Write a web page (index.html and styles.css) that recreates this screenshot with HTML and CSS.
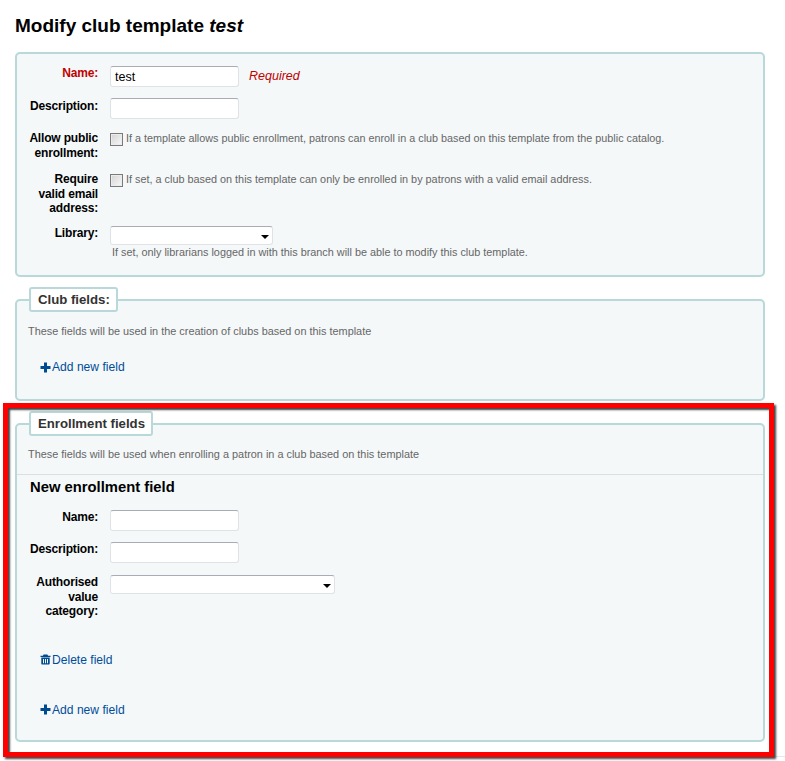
FILE: index.html
```html
<!DOCTYPE html>
<html lang="en">
<head>
<meta charset="utf-8">
<title>Modify club template</title>
<link rel="stylesheet" href="styles.css">
</head>
<body>
<main class="page">
  <h1 class="title">Modify club template <i>test</i></h1>

  <fieldset class="box box-main">
    <div class="row row-name">
      <label class="lbl lbl-req">Name:</label>
      <input class="txt" type="text" value="test">
      <span class="req">Required</span>
    </div>
    <div class="row row-desc">
      <label class="lbl">Description:</label>
      <input class="txt" type="text">
    </div>
    <div class="row row-allow">
      <label class="lbl">Allow public enrollment:</label>
      <span class="check"></span>
      <span class="hint">If a template allows public enrollment, patrons can enroll in a club based on this template from the public catalog.</span>
    </div>
    <div class="row row-valid">
      <label class="lbl">Require valid email address:</label>
      <span class="check"></span>
      <span class="hint hint-valid">If set, a club based on this template can only be enrolled in by patrons with a valid email address.</span>
    </div>
    <div class="row row-lib">
      <label class="lbl">Library:</label>
      <div class="stack">
        <span class="sel sel-lib"></span>
        <span class="hint hint-under">If set, only librarians logged in with this branch will be able to modify this club template.</span>
      </div>
    </div>
  </fieldset>

  <fieldset class="box box-club">
    <legend class="leg">Club fields:</legend>
    <p class="intro">These fields will be used in the creation of clubs based on this template</p>
    <a class="act act-club" href="#"><svg class="ico" viewBox="0 0 11 11"><path d="M4 0.5h3v3.5h3.5v3H7v3.500H4V7H0.500V4H4z"/></svg>Add new field</a>
  </fieldset>

  <fieldset class="box box-enrol">
    <legend class="leg">Enrollment fields</legend>
    <p class="intro intro-enrol">These fields will be used when enrolling a patron in a club based on this template</p>
    <section class="sub">
      <h2 class="subhead">New enrollment field</h2>
      <div class="row row-sname">
        <label class="lbl">Name:</label>
        <input class="txt" type="text">
      </div>
      <div class="row row-sdesc">
        <label class="lbl">Description:</label>
        <input class="txt" type="text">
      </div>
      <div class="row row-cat">
        <label class="lbl">Authorised value category:</label>
        <span class="sel sel-cat"></span>
      </div>
      <a class="act act-del" href="#"><svg class="ico" viewBox="0 0 11 11"><path d="M3.600 0.500h3.800l0.700 1.200h2.400v1.300H0.500V1.700h2.400zM1.300 3.600h8.400v6.000c0 0.600-0.400 1-1 1H2.300c-0.600 0-1-0.400-1-1zM3 5v4.300h1V5zM5 5v4.300h1V5zM7 5v4.300h1V5z" fill-rule="evenodd"/></svg>Delete field</a>
    </section>
    <a class="act act-add" href="#"><svg class="ico" viewBox="0 0 11 11"><path d="M4 0.5h3v3.5h3.5v3H7v3.500H4V7H0.500V4H4z"/></svg>Add new field</a>
  </fieldset>

  <div class="edge"></div>
  <div class="marker"></div>
</main>
</body>
</html>
```

FILE: styles.css
```css
* { box-sizing: border-box; }

html, body {
  margin: 0;
  padding: 0;
  background: #fff;
}

body {
  font-family: "Liberation Sans", Arial, sans-serif;
  font-size: 12px;
  color: #000;
}

.page {
  position: relative;
  width: 785px;
  height: 761px;
  padding: 15px 20px 0 15px;
  overflow: hidden;
}

.title {
  margin: 0 0 16px;
  font-size: 19px;
  line-height: 21px;
  font-weight: bold;
}

.box {
  display: block;
  width: 750px;
  min-width: 0;
  margin: 0;
  padding: 0;
  background: #f4f8f9;
  border: 2px solid #b9d8d9;
  border-radius: 5px;
}

.box-main { height: 225px; padding-top: 12px; }
.box-club { height: 114px; margin-top: 10px; }
.box-enrol { height: 331px; margin-top: 10px; }

.leg {
  margin-left: 12px;
  padding: 3px 6px 3px 7px;
  height: 25px;
  font-size: 13.200px;
  line-height: 16px;
  font-weight: bold;
  color: #333;
  background: #fff;
  border: 2px solid #b9d8d9;
  border-radius: 3px;
}

.row { display: flex; align-items: flex-start; }

.lbl {
  flex: none;
  width: 72px;
  margin: 0 12px 0 9px;
  text-align: right;
  font-size: 12px;
  letter-spacing: -0.170px;
  font-weight: bold;
  line-height: 14.500px;
}

.lbl-req { color: #c00000; }

.row-desc { margin-top: 11px; }
.row-desc .lbl { padding-top: 1px; }
.row-allow { margin-top: 12px; }
.row-valid { margin-top: 12px; }
.row-lib { margin-top: 10.500px; }

.txt {
  width: 129px;
  height: 21px;
  padding: 0 4px;
  font: 12.500px "Liberation Sans", Arial, sans-serif;
  color: #000;
  background: #fff;
  border: 1px solid #dfe3e8;
  border-top-color: #a9acb4;
  border-radius: 3px;
  outline: none;
}

.req {
  margin-left: 10px;
  font-size: 12.500px;
  line-height: 21px;
  font-style: italic;
  color: #c00000;
}

.check {
  flex: none;
  width: 13px;
  height: 13px;
  margin: 2px 3px 0 0;
  background: linear-gradient(135deg, #d4d4d4, #f8f8f8);
  border: 1px solid #7a7a7a;
  box-shadow: inset 0 0 0 1px #ececec;
}

.hint {
  font-size: 10.800px;
  line-height: 14px;
  color: #666;
}

.hint-valid { font-size: 10.850px; }

.stack { display: flex; flex-direction: column; }
.hint-under { margin: 0 0 0 2px; font-size: 10.850px; }

.sel {
  position: relative;
  display: block;
  height: 19px;
  background: #fff;
  border: 1px solid #dfe3e8;
  border-top-color: #a9acb4;
  border-radius: 3px;
}

.sel::after {
  content: "";
  position: absolute;
  right: 3px;
  top: 8px;
  border-left: 4px solid transparent;
  border-right: 4px solid transparent;
  border-top: 4px solid #000;
}

.sel-lib { width: 163px; }
.sel-cat { width: 225px; }

.intro {
  margin: 0;
  padding: 12px 0 0 11px;
  font-size: 10.900px;
  line-height: 14px;
  color: #666;
}

.intro-enrol {
  height: 39px;
  padding-top: 11px;
  border-bottom: 1px solid #dcdee0;
}

.act {
  display: flex;
  align-items: center;
  width: max-content;
  font-size: 12.100px;
  line-height: 14px;
  color: #004d99;
  text-decoration: none;
}

.ico {
  flex: none;
  width: 11px;
  height: 11px;
  margin-right: 1px;
  fill: #004a8f;
}

.act-club { margin: 22px 0 0 23px; }
.act-del { margin: 34px 0 0 23px; }
.act-add { margin: 36px 0 0 23px; }

.subhead {
  margin: 0;
  padding: 4px 0 0 13px;
  font-size: 14.800px;
  line-height: 16px;
  font-weight: bold;
}

.row-sname { margin-top: 15px; }
.row-sdesc { margin-top: 11px; }
.row-cat { margin-top: 12px; }

.edge {
  position: absolute;
  left: 775px;
  right: 0;
  top: 756px;
  height: 1px;
  background: #e6e6e6;
}

.marker {
  position: absolute;
  left: 3px;
  top: 403px;
  width: 771px;
  height: 354px;
  border: 5px solid #f00;
  box-shadow: 2px 2px 2px #444, inset 2px 2px 2px #444;
  pointer-events: none;
}
```
